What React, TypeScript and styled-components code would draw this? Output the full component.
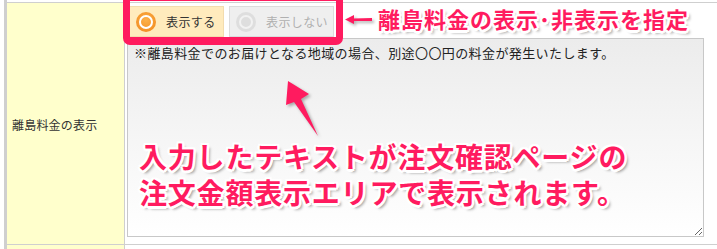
import React from "react";
import styled, { createGlobalStyle } from "styled-components";

const Global = createGlobalStyle`
  html, body { margin: 0; padding: 0; background: #fff; }
  body { font-family: "Noto Sans CJK JP", "Noto Sans", sans-serif; color: #333; }
`;

const Page = styled.div`
  position: relative;
  width: 717px;
  height: 249px;
  overflow: hidden;
`;

const Table = styled.div`
  margin-left: 4px;
  border-left: 3px solid #cfcfcf;
  padding-top: 2px;
`;

const Row = styled.div<{ $h: number }>`
  display: grid;
  grid-template-columns: 118px 1fr;
  height: ${(p) => p.$h}px;
  border-top: 1px solid #cfcfcf;
`;

const LabelCell = styled.div`
  background: #ffffcc;
  border-right: 1px solid #cfcfcf;
  display: flex;
  align-items: center;
  padding-left: 5px;
  font-size: 12px;
  letter-spacing: 0.2px;
  color: #333;
  padding-top: 1px;
`;

const ValueCell = styled.div`
  display: flex;
  flex-direction: column;
  padding: 3px 0 0 4px;
`;

const RadioGroup = styled.div`
  display: flex;
  gap: 5px;
`;

const RadioButton = styled.div<{ $on?: boolean; $w: number }>`
  box-sizing: border-box;
  width: ${(p) => p.$w}px;
  height: 31px;
  display: flex;
  align-items: center;
  gap: 10px;
  padding-left: 6px;
  border: 1px solid ${(p) => (p.$on ? "#f3dcae" : "#dcdcdc")};
  background: ${(p) => (p.$on ? "#ffebbd" : "#efefef")};
  font-size: 12px;
  letter-spacing: 0.4px;
  color: ${(p) => (p.$on ? "#333" : "#b0b0b0")};
`;

const RadioDot = styled.span<{ $on?: boolean }>`
  position: relative;
  flex: none;
  width: 20px;
  height: 20px;
  border-radius: 50%;
  background: ${(p) =>
    p.$on
      ? "radial-gradient(circle at 50% 40%, #fcb14a, #f08518)"
      : "#dedede"};
  &::after {
    content: "";
    position: absolute;
    inset: 3px;
    border-radius: 50%;
    border: 2px solid ${(p) => (p.$on ? "#fff" : "#f2f2f2")};
  }
`;

const Note = styled.textarea`
  box-sizing: border-box;
  margin: 1px 0 0 -2px;
  width: 577px;
  height: 199px;
  border: 1px solid #c8c8c8;
  background: linear-gradient(#ececec, #ffffff);
  font-family: "Noto Sans CJK JP", sans-serif;
  font-size: 13px;
  letter-spacing: 0.4px;
  line-height: 18px;
  color: #222;
  padding: 5px 6px;
  outline: none;
`;

const SmallBoxes = styled.div`
  display: flex;
  gap: 6px;
  margin: 3px 0 0 -1px;
`;

const SmallBox = styled.div<{ $w: number }>`
  width: ${(p) => p.$w}px;
  height: 10px;
  border: 1px solid #d8d8d8;
  background: #f4f4f4;
`;

const HighlightBox = styled.div`
  position: absolute;
  left: 123px;
  top: -6px;
  width: 220px;
  height: 51px;
  box-sizing: border-box;
  border: 7px solid #ff1b5f;
  border-bottom-width: 8px;
  border-radius: 7px;
`;

const Callout = styled.div<{ $size: number; $lh: number; $ls: number }>`
  position: absolute;
  font-family: "Noto Sans CJK JP", sans-serif;
  font-weight: 700;
  font-size: ${(p) => p.$size}px;
  line-height: ${(p) => p.$lh}px;
  letter-spacing: ${(p) => p.$ls}px;
  color: #ff1b5f;
  white-space: nowrap;
  text-shadow: 2.5px 0 #fff, -2.5px 0 #fff, 0 2.5px #fff, 0 -2.5px #fff,
    1.8px 1.8px #fff, -1.8px 1.8px #fff, 1.8px -1.8px #fff, -1.8px -1.8px #fff,
    3px 3px 3px rgba(0, 0, 0, 0.4);
`;

const ArrowSvg = styled.svg`
  position: absolute;
  left: 0;
  top: 0;
  overflow: visible;
  pointer-events: none;
  filter: drop-shadow(2px 2px 1.5px rgba(0, 0, 0, 0.3));
`;

export default function App() {
  return (
    <Page>
      <Global />
      <Table>
        <Row $h={241}>
          <LabelCell>離島料金の表示</LabelCell>
          <ValueCell>
            <RadioGroup>
              <RadioButton $on $w={95}>
                <RadioDot $on />
                表示する
              </RadioButton>
              <RadioButton $w={105}>
                <RadioDot />
                表示しない
              </RadioButton>
            </RadioGroup>
            <Note
              readOnly
              defaultValue="※離島料金でのお届けとなる地域の場合、別途〇〇円の料金が発生いたします。"
            />
          </ValueCell>
        </Row>
        <Row $h={20}>
          <LabelCell />
          <ValueCell>
            <SmallBoxes>
              <SmallBox $w={94} />
              <SmallBox $w={104} />
            </SmallBoxes>
          </ValueCell>
        </Row>
      </Table>

      <HighlightBox />
      <ArrowSvg width="717" height="249">
        <polygon points="345,19.5 354,15 354,18.5 372,18 372,21 354,21 354,24" fill="#ff1b5f" />
        <polygon
          points="288,81 309,94 301,99 318,136 294,102 286,105"
          fill="#ff1b5f"
        />
      </ArrowSvg>
      <Callout $size={22} $lh={28} $ls={1} style={{ left: 378, top: 4 }}>
        離島料金の表示･非表示を指定
      </Callout>
      <Callout $size={28} $lh={36} $ls={0.8} style={{ left: 139, top: 138 }}>
        入力したテキストが注文確認ページの
        <br />
        注文金額表示エリアで表示されます。
      </Callout>
    </Page>
  );
}
